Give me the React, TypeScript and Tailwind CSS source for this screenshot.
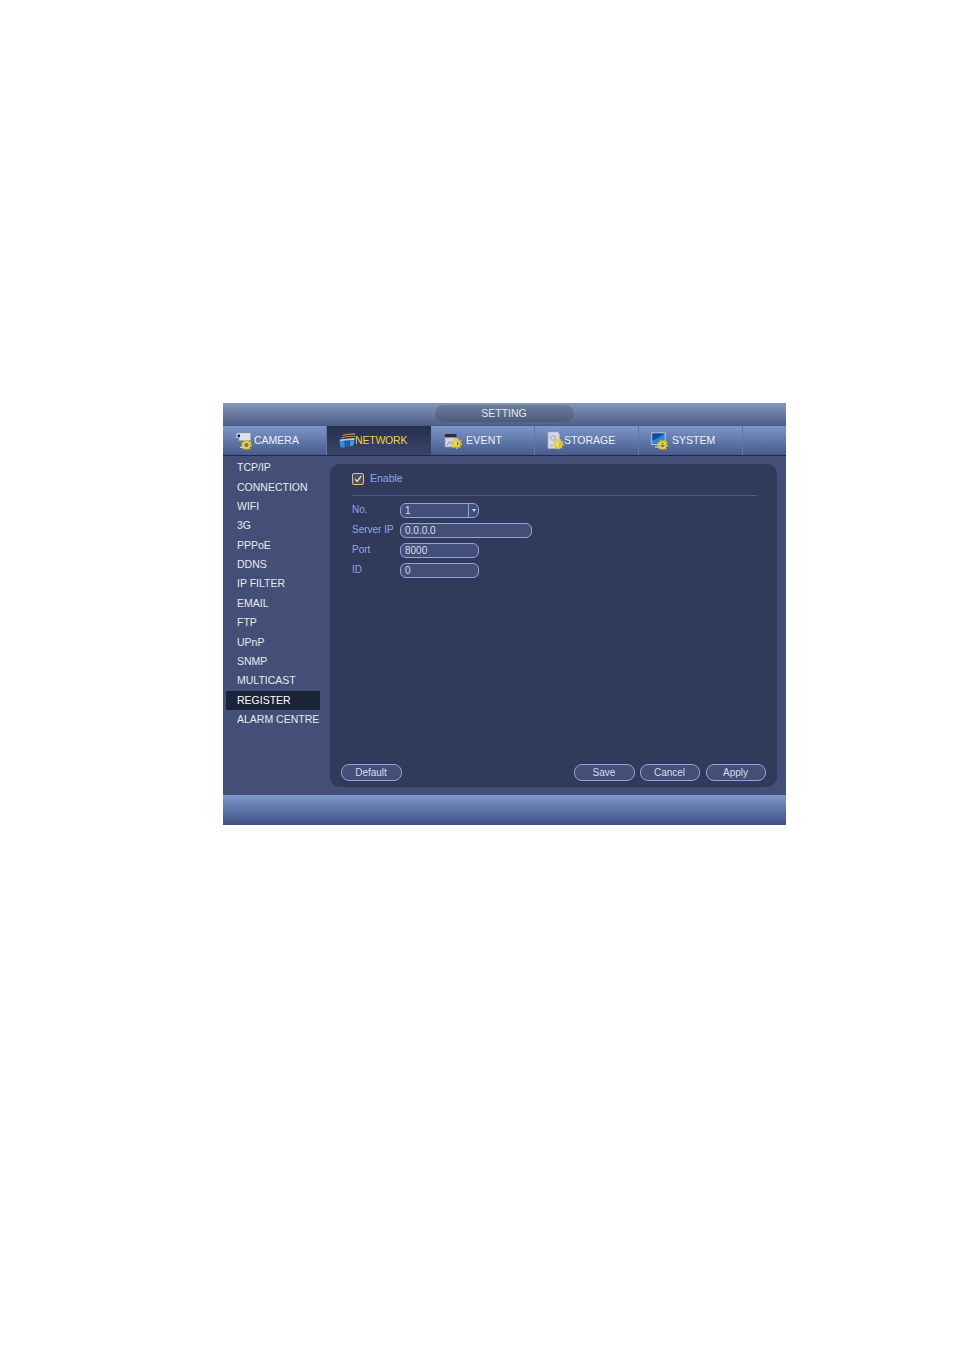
const font = { fontFamily: '"Liberation Sans", Arial, sans-serif' };

function Gear({ x, y }: { x: number; y: number }) {
  return (
    <g transform={`translate(${x} ${y})`}>
      <circle r="3" fill="none" stroke="#f2d31a" strokeWidth="2" />
      <circle r="4.6" fill="none" stroke="#e8c414" strokeWidth="1.5" strokeDasharray="1.7 1.4" />
    </g>
  );
}

function CameraIcon() {
  return (
    <svg width="18" height="18" viewBox="0 0 18 18" className="shrink-0">
      <rect x="3" y="1" width="11.5" height="7.5" fill="#dfe4ec" stroke="#9aa3b3" strokeWidth="0.5" />
      <rect x="0.5" y="1.5" width="4.5" height="4.5" fill="#eef1f6" />
      <rect x="1.5" y="2.5" width="2.6" height="2.8" fill="#1a2030" />
      <path d="M7 11v3.5M4 15.5h4" stroke="#cfd6e2" strokeWidth="1.2" />
      <Gear x={10.5} y={13} />
    </svg>
  );
}

function NetworkIcon() {
  return (
    <svg width="16" height="15" viewBox="0 0 16 15" className="shrink-0">
      <path d="M4 2.5C7 1 11 0.8 16 1" fill="none" stroke="#e3b23c" strokeWidth="1.1" />
      <path d="M2.5 5C6 3.4 11 3 16 3.3" fill="none" stroke="#c98f2e" strokeWidth="1.1" />
      <path d="M1 6.5L15.5 5V7L1 8Z" fill="#a9d4f5" />
      <path d="M0.5 8H5.5L6 14.5H1.5Z" fill="#2f8ee0" />
      <path d="M6.2 7.8H10.5L10.2 13.8H6.6Z" fill="#1b62b8" />
      <path d="M11 7.5H15.5L14 13H10.8Z" fill="#3c9ce6" />
    </svg>
  );
}

function EventIcon() {
  return (
    <svg width="18" height="16" viewBox="0 0 18 16" className="shrink-0">
      <rect x="1" y="1" width="11.5" height="3.6" fill="#2c2f36" />
      <path d="M1 4.6H13V14H1Z" fill="#cfd6e3" stroke="#8f98a8" strokeWidth="0.5" />
      <path d="M3 12.5l2.5-4 2 2.5 1.5-2" fill="none" stroke="#7393c8" strokeWidth="1" />
      <Gear x={12.6} y={10.6} />
    </svg>
  );
}

function StorageIcon() {
  return (
    <svg width="17" height="19" viewBox="0 0 17 19" className="shrink-0">
      <path d="M1 1H10.5L12.5 3V17.5H1Z" fill="#d3d9e6" stroke="#a3aec2" strokeWidth="0.6" />
      <circle cx="6" cy="7" r="3.2" fill="#b6c0d2" />
      <circle cx="6" cy="7" r="1" fill="#eef1f6" />
      <path d="M3 15H6" stroke="#8490a6" strokeWidth="0.7" />
      <Gear x={11.5} y={13} />
    </svg>
  );
}

function SystemIcon() {
  return (
    <svg width="17" height="18" viewBox="0 0 17 18" className="shrink-0">
      <rect x="0.8" y="0.8" width="13.4" height="11.7" fill="#2a86de" stroke="#c2cbdb" strokeWidth="0.9" />
      <path d="M1.4 8.5C5 7.5 9 4.5 13.6 1.4H1.4Z" fill="#154a9e" />
      <path d="M4 15h6" stroke="#cbd3e0" strokeWidth="1.4" />
      <Gear x={11.6} y={13} />
    </svg>
  );
}

const tabs = [
  { label: "CAMERA", icon: <CameraIcon />, cls: "gap-[0px] pl-[13px]" },
  { label: "NETWORK", icon: <NetworkIcon />, cls: "gap-[0px] pl-[12px] tracking-[-0.2px]", active: true },
  { label: "EVENT", icon: <EventIcon />, cls: "gap-[4px] pl-[13px] tracking-[0.25px]" },
  { label: "STORAGE", icon: <StorageIcon />, cls: "gap-[0px] pl-[12px]" },
  { label: "SYSTEM", icon: <SystemIcon />, cls: "gap-[4px] pl-[12px]" },
];

const menu = ["TCP/IP", "CONNECTION", "WIFI", "3G", "PPPoE", "DDNS", "IP FILTER", "EMAIL", "FTP", "UPnP", "SNMP", "MULTICAST", "REGISTER", "ALARM CENTRE"];

function Field({ label, value, wide, select }: { label: string; value: string; wide?: boolean; select?: boolean }) {
  return (
    <div className="flex h-[20px] items-center">
      <span className="mb-[2px] w-[48px] shrink-0 text-[10px] text-[#8fa6e6]">{label}</span>
      <div className={`flex h-[15px] items-center overflow-hidden rounded-[6px] border border-[#8ea6df] bg-[#434f77] ${wide ? "w-[132px]" : "w-[79px]"}`}>
        <span className="flex-1 pl-[4px] text-[10px] text-[#d8dce6]">{value}</span>
        {select && (
          <span className="flex h-full w-[10px] items-center justify-center border-l border-[#8ea6df]">
            <span className="h-0 w-0 border-x-[2.5px] border-t-[3px] border-x-transparent border-t-[#d8dce6]" />
          </span>
        )}
      </div>
    </div>
  );
}

function Btn({ label, w }: { label: string; w: string }) {
  return (
    <div className={`flex h-[17px] items-center justify-center rounded-[8px] border border-[#8ea6df] bg-[#434f77] pr-[1px] text-[10px] text-[#d8dce6] ${w}`}>
      {label}
    </div>
  );
}

export default function App() {
  return (
    <div className="h-[1350px] w-[954px] bg-white pl-[223px] pt-[403px]" style={font}>
      <div className="flex h-[422px] w-[563px] flex-col bg-[#434f77]">
        <div className="flex h-[23px] shrink-0 items-start justify-center border-b border-[#4a5c86] bg-gradient-to-b from-[#8496bb] to-[#4f618a] pt-[2px]">
          <div className="mr-[1px] flex h-[17px] w-[139px] items-center justify-center rounded-[9px] bg-gradient-to-b from-[#6e7b9a] to-[#4c5b7d] text-[10.5px] text-[#e4e7ee]">
            SETTING
          </div>
        </div>
        <div className="flex h-[30px] shrink-0 border-b border-[#1f2a42] bg-gradient-to-b from-[#7d97cb] to-[#475b8c]">
          {tabs.map((t) => (
            <div
              key={t.label}
              className={`flex w-[104px] items-center ${t.cls} ${t.active ? "bg-gradient-to-b from-[#252f50] to-[#3a4568] text-[#f0d43a]" : "border-r border-[#5f75a3] text-[#eef1f6]"} text-[10.5px]`}
            >
              {t.icon}
              <span>{t.label}</span>
            </div>
          ))}
        </div>
        <div className="flex min-h-0 flex-1">
          <div className="flex w-[107px] shrink-0 flex-col pl-[3px] pt-[2.3px]">
            {menu.map((m) => (
              <div
                key={m}
                className={`flex h-[19.4px] w-[94px] items-center whitespace-nowrap pl-[11px] text-[10.5px] text-[#e6e9f0] ${m === "REGISTER" ? "bg-[#1a2337] text-white" : ""}`}
              >
                {m}
              </div>
            ))}
          </div>
          <div className="mb-[8px] mt-[8px] flex w-[447px] flex-col rounded-[10px] bg-[#313a5a] pb-[6px] pl-[11px] pr-[11px] pt-[7px]">
            <div className="ml-[11px] flex h-[16px] items-center gap-[6px] pb-[1px]">
              <div className="flex h-[12px] w-[12px] items-center justify-center rounded-[2px] border border-[#e0c870] bg-[#434f77]">
                <svg width="10" height="10" viewBox="0 0 10 10">
                  <path d="M2 5l2.2 2.4L8.2 2" fill="none" stroke="#f5e27a" strokeWidth="1.3" />
                </svg>
              </div>
              <span className="mt-[1px] text-[10.5px] text-[#8fa6e6]">Enable</span>
            </div>
            <div className="ml-[11px] mr-[9px] mt-[8px] h-px bg-[#4c5a80]" />
            <div className="ml-[11px] mt-[4px] flex flex-col">
              <Field label="No." value="1" select />
              <Field label="Server IP" value="0.0.0.0" wide />
              <Field label="Port" value="8000" />
              <Field label="ID" value="0" />
            </div>
            <div className="mt-auto flex items-center">
              <Btn label="Default" w="w-[61px]" />
              <div className="flex-1" />
              <Btn label="Save" w="w-[61px]" />
              <div className="w-[5px]" />
              <Btn label="Cancel" w="w-[60px]" />
              <div className="w-[6px]" />
              <Btn label="Apply" w="w-[60px]" />
            </div>
          </div>
        </div>
        <div className="h-[30px] shrink-0 bg-gradient-to-b from-[#7c98cd] to-[#3f5284]" />
      </div>
    </div>
  );
}
